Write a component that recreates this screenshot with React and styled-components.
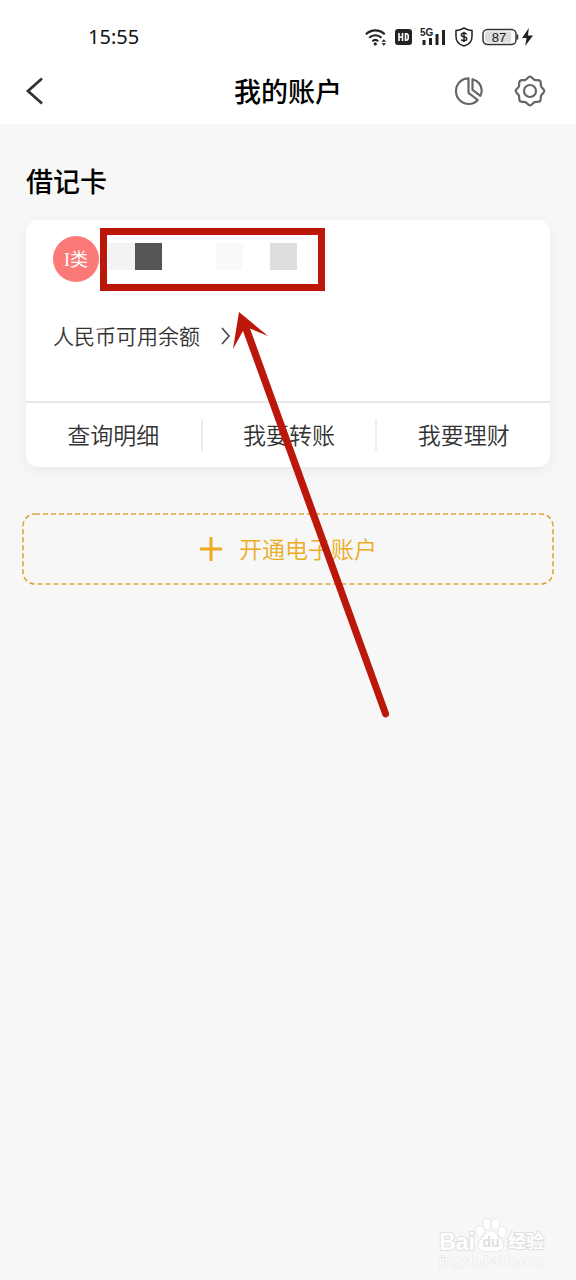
import React from "react";
import styled, { createGlobalStyle } from "styled-components";

const GlobalStyle = createGlobalStyle`
  * { box-sizing: border-box; }
  body {
    margin: 0;
    background: #f7f7f7;
    color: #333;
    font-family: "Noto Sans", "Noto Sans CJK SC", sans-serif;
  }
  button { font: inherit; color: inherit; background: none; border: 0; padding: 0; cursor: pointer; }
  h1, h2 { margin: 0; }
  svg { display: block; flex: none; }
`;

const Screen = styled.div`
  position: relative;
  min-height: 100vh;
  display: flex;
  flex-direction: column;
  overflow: hidden;
`;

const Header = styled.header`
  background: #fff;
`;

const StatusBar = styled.div`
  display: flex;
  align-items: center;
  justify-content: space-between;
  height: 60px;
  padding: 14px 42px 0 88px;
`;

const Clock = styled.time`
  font-size: 20px;
  line-height: 24px;
  color: #111;
`;

const StatusIcons = styled.div`
  display: flex;
  align-items: center;
  gap: 8px;
`;

const NavBar = styled.nav`
  display: grid;
  grid-template-columns: 1fr auto 1fr;
  align-items: center;
  height: 64px;
  padding: 0 24px 2px;
`;

const NavActions = styled.div`
  display: flex;
  justify-content: flex-end;
  align-items: center;
  gap: 30px;
  padding-right: 6px;
`;

const IconButton = styled.button`
  display: flex;
  justify-self: start;
`;

const PageTitle = styled.h1`
  padding-top: 2px;
  font-size: 27px;
  line-height: 40px;
  font-weight: 500;
  color: #000;
`;

const Main = styled.main`
  flex: 1;
  padding: 38px 26px 0;
`;

const SectionTitle = styled.h2`
  font-size: 27px;
  line-height: 40px;
  font-weight: 500;
  color: #000;
`;

const Card = styled.section`
  margin-top: 18px;
  border-radius: 12px;
  background: #fff;
  box-shadow: 0 4px 16px rgba(0, 0, 0, 0.05);
`;

const CardBody = styled.div`
  height: 183px;
  padding: 16px 27px 0;
  border-bottom: 2px solid #e8e8e8;
`;

const AccountRow = styled.div`
  display: flex;
  align-items: center;
  height: 46px;
`;

const TypeBadge = styled.span`
  width: 46px;
  height: 46px;
  border-radius: 50%;
  background: #fb7a77;
  color: #fff;
  font-family: "Liberation Serif", "Noto Sans CJK SC", serif;
  font-size: 18px;
  line-height: 48px;
  text-align: center;
`;

const MaskedNumber = styled.div`
  position: relative;
  display: flex;
  margin-left: 9px;
  padding-bottom: 6px;
`;

const MaskBlock = styled.span`
  width: 27px;
  height: 27px;
  background: ${(p) => p.$tone};
`;

const Highlight = styled.span`
  position: absolute;
  top: -15px;
  left: -8px;
  width: 225px;
  height: 63px;
  border: 7px solid #bb170b;
`;

const BalanceButton = styled.button`
  display: flex;
  align-items: center;
  gap: 20px;
  margin-top: 38px;
  font-size: 21px;
  line-height: 32px;
  font-weight: 350;
`;

const CardActions = styled.div`
  display: grid;
  grid-template-columns: repeat(3, 1fr);
  padding: 16px 0;
`;

const CardAction = styled.button`
  height: 32px;
  font-size: 23px;
  line-height: 32px;
  font-weight: 350;
  & + & { border-left: 2px solid #ececec; }
`;

const OpenAccount = styled.button`
  position: relative;
  display: flex;
  align-items: center;
  justify-content: center;
  gap: 16px;
  width: calc(100% + 8px);
  height: 72px;
  margin: 46px -4px 0;
  color: #eaac22;
  font-size: 23px;
  line-height: 32px;
  font-weight: 350;
`;

const DashedOutline = styled.svg`
  position: absolute;
  inset: 0;
  width: 100%;
  height: 100%;
  rect {
    width: calc(100% - 2px);
    height: calc(100% - 2px);
  }
`;

const Arrow = styled.svg`
  position: absolute;
  top: 310px;
  left: 230px;
  pointer-events: none;
`;

const Watermark = styled.footer`
  align-self: flex-end;
  display: flex;
  flex-direction: column;
  align-items: flex-end;
  padding: 0 32px 12px 0;
  color: #fff;
`;

const WatermarkBrand = styled.div`
  display: flex;
  align-items: flex-end;
  height: 36px;
  font-family: "Liberation Sans", "Noto Sans CJK SC", sans-serif;
  font-size: 23px;
  line-height: 24px;
  font-weight: 700;
  paint-order: stroke fill;
  -webkit-text-stroke: 2px #e0e0e0;
`;

const WatermarkPaw = styled.span`
  padding-bottom: 2px;
`;

const WatermarkChinese = styled.span`
  font-size: 18px;
  margin-left: 1px;
`;

const WatermarkSite = styled.div`
  font-family: "Liberation Sans", sans-serif;
  font-size: 13px;
  line-height: 14px;
  paint-order: stroke fill;
  -webkit-text-stroke: 1px #e6e6e6;
`;

const WifiIcon = () => (
  <svg width="22" height="19" viewBox="0 0 24 20" fill="none" stroke="#222" strokeWidth="2.3">
    <path d="M1 6.5C7 .8 15.500 .8 21.500 6.500M4.500 10.300C8.500 6.600 14 6.600 18 10.300M8 14C10 12.200 12.500 12.200 14.500 14" />
    <circle cx="11.200" cy="17" r="1.800" fill="#222" stroke="none" />
    <path d="M18 14.500 20.500 11.800 23 14.500ZM18 16.200 20.500 18.900 23 16.200Z" fill="#222" stroke="none" />
  </svg>
);

const HdIcon = () => (
  <svg width="17" height="16" viewBox="0 0 17 16">
    <rect width="17" height="16" rx="3" fill="#222" />
    <path d="M4 4v8M7.500 4v8M4 8h3.500M10.500 4.800v6.400h.8c1.500 0 2-1 2-3.200s-.5-3.200-2-3.200z" fill="none" stroke="#fff" strokeWidth="1.600" />
  </svg>
);

const SignalIcon = () => (
  <svg width="26" height="18" viewBox="0 0 26 18">
    <text x="0" y="8" fontFamily="Liberation Sans, sans-serif" fontSize="10" fontWeight="700" fill="#222">5G</text>
    <path d="M4 12v5M10.500 10v7M17 6v11M23.500 2v15" stroke="#222" strokeWidth="3" />
  </svg>
);

const ShieldIcon = () => (
  <svg width="20" height="20" viewBox="0 0 20 20" fill="none" stroke="#222" strokeWidth="1.500">
    <path d="M10 1C12.500 2.600 15 3.300 18 3.500V9.500C18 14.500 15 17.500 10 19C5 17.500 2 14.500 2 9.500V3.500C5 3.300 7.500 2.600 10 1Z" />
    <path d="M12.600 7.300C12 6.200 11 6 10 6 8.500 6 7.400 6.700 7.400 8 7.400 10.600 12.700 9 12.700 11.800 12.700 13.100 11.500 13.800 10 13.800 8.800 13.800 7.800 13.400 7.200 12.500M10 4.800V15" />
  </svg>
);

const BatteryIcon = () => (
  <svg width="52" height="18" viewBox="0 0 52 18">
    <rect x="1" y="1.500" width="33" height="15" rx="4.500" fill="#fff" stroke="#333" strokeWidth="1.500" />
    <path d="M5.500 3.500H29V14.500H5.500Q3 14.500 3 12V6Q3 3.500 5.500 3.500Z" fill="#dcdcdc" />
    <path d="M35.500 6.500v5" stroke="#333" strokeWidth="1.500" />
    <text x="17" y="13.500" textAnchor="middle" fontFamily="Liberation Sans, sans-serif" fontSize="13" fill="#222">87</text>
    <path d="M46.800 0 40 10H44.500L43.200 18 51 7.500H46Z" fill="#222" />
  </svg>
);

const BackIcon = () => (
  <svg width="22" height="28" viewBox="0 0 22 28" fill="none" stroke="#333" strokeWidth="2.800">
    <path d="M18 1.500 4 14 18 26.500" />
  </svg>
);

const ChartIcon = () => (
  <svg width="30" height="30" viewBox="0 0 30 30" fill="none" stroke="#666" strokeWidth="2.200" strokeLinejoin="round">
    <path d="M14.500 2.300C7.500 2.300 2 8 2 15.200 2 22.200 7.800 28 14.700 28 18.300 28 21.500 26.600 23.700 24L14.500 16.800Z" />
    <path d="M18.500 3.200C24.300 4.500 27.700 9.500 27.700 14.500 27.700 16.400 27.200 18.200 26.400 19.800L18.500 13.800Z" />
  </svg>
);

const gearPath =
  "M16 1.700C17.900 1.700 18.800 4.200 20.600 4.900 22.400 5.600 24.800 4.600 26.100 5.900 27.400 7.200 26.400 9.600 27.100 11.400 27.800 13.200 30.300 14.100 30.300 16 30.300 17.900 27.800 18.800 27.100 20.600 26.400 22.400 27.400 24.800 26.100 26.100 24.800 27.400 22.400 26.400 20.600 27.100 18.800 27.800 17.900 30.300 16 30.300 14.100 30.300 13.200 27.800 11.400 27.100 9.600 26.400 7.200 27.400 5.900 26.100 4.600 24.800 5.600 22.400 4.900 20.600 4.200 18.800 1.700 17.900 1.700 16 1.700 14.100 4.200 13.200 4.900 11.400 5.600 9.600 4.600 7.200 5.900 5.900 7.200 4.600 9.600 5.600 11.400 4.900 13.200 4.200 14.100 1.700 16 1.700Z";

const SettingsIcon = () => (
  <svg width="32" height="32" viewBox="0 0 32 32" fill="none" stroke="#666" strokeWidth="2.200">
    <path d={gearPath} strokeLinejoin="round" />
    <circle cx="16" cy="16" r="6" />
  </svg>
);

const ChevronIcon = () => (
  <svg width="12" height="20" viewBox="0 0 12 20" fill="none" stroke="#444" strokeWidth="1.600">
    <path d="M2 2 9 10 2 18" />
  </svg>
);

const PlusIcon = () => (
  <svg width="24" height="24" viewBox="0 0 24 24" fill="none" stroke="#efaa20" strokeWidth="3">
    <path d="M12 0V24M1 12H23" />
  </svg>
);

const PawIcon = () => (
  <svg width="32" height="34" viewBox="0 0 32 34" fill="#fff" stroke="#dcdcdc" strokeWidth="1.200">
    <ellipse cx="5" cy="13" rx="4" ry="5.200" />
    <ellipse cx="12" cy="6" rx="4" ry="5.200" />
    <ellipse cx="20.500" cy="6" rx="4" ry="5.200" />
    <ellipse cx="27" cy="14" rx="4" ry="5.200" />
    <path d="M16 13C21 13 22 18 26 21.500 31 26 28 33 22 33H10C3 33 1 26 6 21.500 10 18 11 13 16 13Z" />
    <text x="16" y="29" textAnchor="middle" fontFamily="Liberation Sans, sans-serif" fontSize="14" fontWeight="700" fill="#dedede" stroke="none" style={{ WebkitTextStroke: 0 }}>du</text>
  </svg>
);

const maskTones = ["#f3f3f3", "#555", "#fff", "#fff", "#f9f9f9", "#fff", "#ddd"];
const cardActions = ["查询明细", "我要转账", "我要理财"];

export default function App() {
  return (
    <Screen lang="zh-CN">
      <GlobalStyle />
      <Header>
        <StatusBar>
          <Clock>15:55</Clock>
          <StatusIcons>
            <WifiIcon />
            <HdIcon />
            <SignalIcon />
            <ShieldIcon />
            <BatteryIcon />
          </StatusIcons>
        </StatusBar>
        <NavBar>
          <IconButton aria-label="返回"><BackIcon /></IconButton>
          <PageTitle>我的账户</PageTitle>
          <NavActions>
            <IconButton aria-label="统计"><ChartIcon /></IconButton>
            <IconButton aria-label="设置"><SettingsIcon /></IconButton>
          </NavActions>
        </NavBar>
      </Header>
      <Main>
        <SectionTitle>借记卡</SectionTitle>
        <Card>
          <CardBody>
            <AccountRow>
              <TypeBadge>I类</TypeBadge>
              <MaskedNumber>
                {maskTones.map((tone, i) => <MaskBlock key={i} $tone={tone} />)}
                <Highlight />
              </MaskedNumber>
            </AccountRow>
            <BalanceButton>人民币可用余额<ChevronIcon /></BalanceButton>
          </CardBody>
          <CardActions>
            {cardActions.map((label) => <CardAction key={label}>{label}</CardAction>)}
          </CardActions>
        </Card>
        <OpenAccount>
          <DashedOutline aria-hidden="true">
            <rect x="1" y="1" rx="12" fill="none" stroke="#dda63a" strokeWidth="1.600" strokeDasharray="5 3" />
          </DashedOutline>
          <PlusIcon />
          开通电子账户
        </OpenAccount>
      </Main>
      <Watermark>
        <WatermarkBrand>
          Bai<WatermarkPaw><PawIcon /></WatermarkPaw><WatermarkChinese>经验</WatermarkChinese>
        </WatermarkBrand>
        <WatermarkSite>jingyan.baidu.com</WatermarkSite>
      </Watermark>
      <Arrow width="162" height="410" viewBox="0 0 162 410" fill="#bb170b" aria-hidden="true">
        <path d="M9 2 38 26 20 18.500 159 403A3.500 3.500 0 0 1 152.500 405.500L13 21 3 39Z" />
      </Arrow>
    </Screen>
  );
}
